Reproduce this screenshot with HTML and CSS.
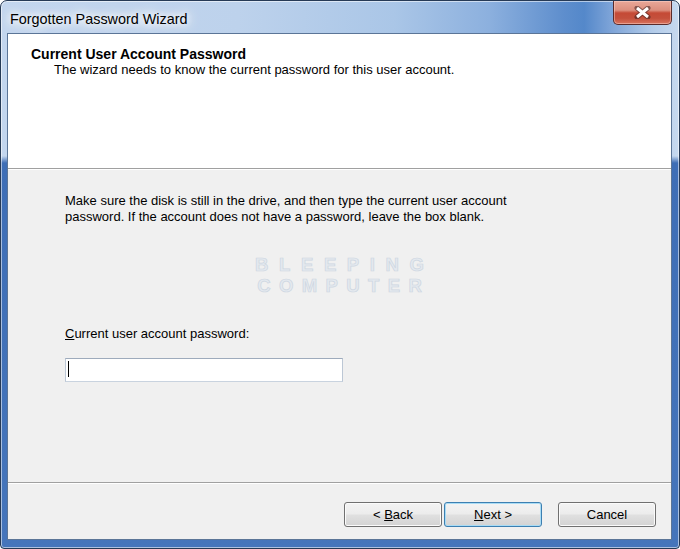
FILE: index.html
```html
<!DOCTYPE html>
<html lang="en">
<head>
<meta charset="utf-8">
<title>Forgotten Password Wizard</title>
<link rel="stylesheet" href="styles.css">
</head>
<body>
<div class="window">
  <div class="titlebar">
    <span class="title">Forgotten Password Wizard</span>
    <button class="close" aria-label="Close">
      <svg width="17" height="13" viewBox="0 0 17 13">
        <path d="M3 2 L14 11 M14 2 L3 11" stroke="#3a1e1e" stroke-width="5" stroke-linecap="round" fill="none" opacity="0.55"/>
        <path d="M3 2 L14 11 M14 2 L3 11" stroke="#ffffff" stroke-width="3" stroke-linecap="butt" fill="none"/>
      </svg>
    </button>
  </div>
  <div class="client">
    <div class="header">
      <div class="h-title">Current User Account Password</div>
      <div class="h-sub">The wizard needs to know the current password for this user account.</div>
    </div>
    <div class="content">
      <p class="intro">Make sure the disk is still in the drive, and then type the current user account<br>password. If the account does not have a password, leave the box blank.</p>
      <div class="watermark">
        <span class="wm-line wm-1">BLEEPING</span>
        <span class="wm-line wm-2">COMPUTER</span>
      </div>
      <label class="field-label"><u>C</u>urrent user account password:</label>
      <div class="input"><span class="caret"></span></div>
    </div>
    <div class="footer">
      <button class="btn">&lt; <u>B</u>ack</button>
      <button class="btn btn-default"><u>N</u>ext &gt;</button>
      <button class="btn btn-cancel">Cancel</button>
    </div>
  </div>
</div>
</body>
</html>
```

FILE: styles.css
```css
* { box-sizing: border-box; }
html, body { margin: 0; padding: 0; }
body {
  width: 680px;
  height: 549px;
  overflow: hidden;
  background: #ffffff;
  font-family: "Liberation Sans", Arial, sans-serif;
  color: #000;
}

.window {
  width: 680px;
  height: 549px;
  border: 1px solid #263a56;
  border-radius: 7px 7px 4px 4px;
  padding: 0 7px 8px 6px;
  display: flex;
  flex-direction: column;
  background:
    linear-gradient(180deg, rgba(61,109,181,0) 0, rgba(61,109,181,0) 155px, #3e6eb6 162px, #4575bb 100%),
    linear-gradient(90deg, #c3d6ee 0%, #bdd2ec 35%, #aac6e7 58%, #8cb0de 72%, #5e8ecd 83%, #5488ca 86%, #7ea4d8 90%, #b2cbe9 96%, #c7d9ef 100%);
  box-shadow: inset 0 0 0 1px rgba(255,255,255,0.55);
}

.titlebar {
  height: 32px;
  display: flex;
  align-items: flex-start;
  flex-shrink: 0;
}

.title {
  padding: 9px 0 0 3px;
  font-size: 14.4px;
  line-height: 18px;
  color: #000;
  text-shadow: 0 0 6px #fff, 0 0 10px #fff, 0 0 14px #fff, 0 0 18px rgba(255,255,255,0.9);
}

.close {
  margin-left: auto;
  width: 59px;
  height: 24px;
  padding: 0;
  border: 1px solid #5a2b2b;
  border-top: none;
  border-radius: 0 0 5px 5px;
  background: linear-gradient(180deg, #e9a899 0%, #dc8f7e 40%, #c54a36 52%, #c4503c 75%, #d9735e 100%);
  box-shadow: inset 0 0 0 1px rgba(255,220,210,0.45);
  display: flex;
  align-items: center;
  justify-content: center;
}

.client {
  flex: 1;
  border: 1px solid #5b7597;
  background: #f0f0f0;
  display: flex;
  flex-direction: column;
}

.header {
  height: 135px;
  flex-shrink: 0;
  background: #ffffff;
  border-bottom: 1px solid #a0a0a0;
  padding: 12px 0 0 23px;
}

.h-title {
  font-size: 14px;
  font-weight: bold;
  line-height: 16px;
}

.h-sub {
  font-size: 13px;
  line-height: 16px;
  padding-left: 23px;
}

.content {
  flex: 1;
  padding: 24px 0 0 57px;
  box-shadow: inset 0 1px 0 #ffffff;
  display: flex;
  flex-direction: column;
  align-items: flex-start;
}

.intro {
  margin: 0;
  font-size: 13px;
  line-height: 16px;
}

.watermark {
  align-self: stretch;
  margin: 29px 0 0 -57px;
  display: flex;
  flex-direction: column;
  align-items: center;
  font-family: "Liberation Sans", Arial, sans-serif;
  font-weight: bold;
  font-size: 18.5px;
  line-height: 21px;
  color: #e4e9ef;
  -webkit-text-stroke: 0.7px #cdd6e1;
}

.wm-line { display: block; height: 21px; }
.wm-1 { letter-spacing: 10.6px; margin-right: -10.6px; }
.wm-2 { letter-spacing: 8.4px; margin-right: -8.4px; margin-top: 0; }

.field-label {
  margin-top: 30px;
  font-size: 13px;
  line-height: 16px;
}

.input {
  margin-top: 16px;
  width: 278px;
  height: 24px;
  background: #ffffff;
  border: 1px solid;
  border-color: #9eabbc #bcc7d5 #c9d3df #bcc7d5;
  padding: 2px 0 0 2px;
}

.caret {
  display: block;
  width: 1px;
  height: 16px;
  background: #000;
}

.footer {
  height: 57px;
  flex-shrink: 0;
  border-top: 1px solid #a0a0a0;
  box-shadow: inset 0 1px 0 #ffffff;
  padding: 19px 15px 0 0;
  display: flex;
  justify-content: flex-end;
  align-items: flex-start;
}

.btn {
  width: 98px;
  height: 25px;
  padding: 0;
  font-family: "Liberation Sans", Arial, sans-serif;
  font-size: 13px;
  line-height: 16px;
  color: #000;
  border: 1px solid #707070;
  border-radius: 3px;
  background: linear-gradient(180deg, #f3f3f3 0%, #ececec 48%, #e0e0e0 52%, #d3d3d3 100%);
  box-shadow: inset 0 0 0 1px #fbfbfb;
}

.btn-default {
  margin-left: 2px;
  border-color: #3c7fb1;
  box-shadow: inset 0 0 0 1px #a9dcf5;
}

.btn-cancel {
  margin-left: 16px;
}
```
